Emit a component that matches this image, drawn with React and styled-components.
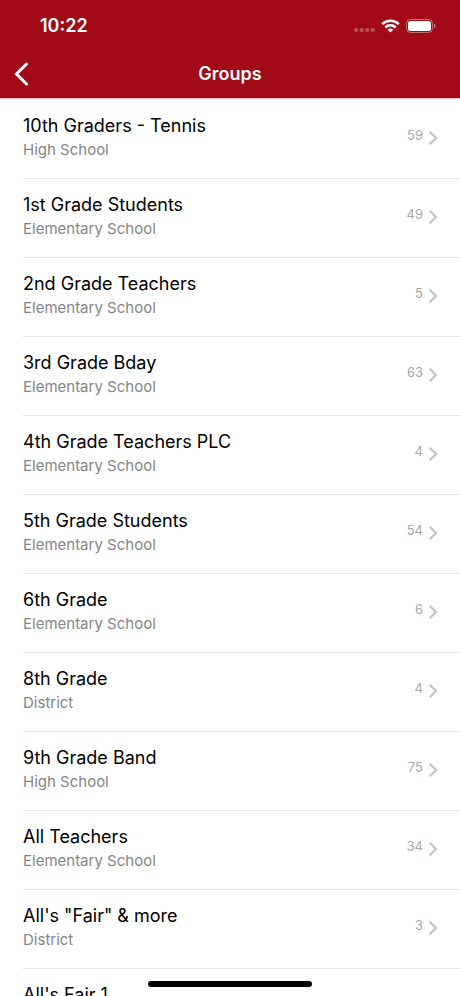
import React from 'react';
import styled, { createGlobalStyle } from 'styled-components';

const GlobalStyle = createGlobalStyle`
  *, *::before, *::after { box-sizing: border-box; }
  body {
    margin: 0;
    background: #fff;
    color: #000;
    font-family: Inter, "Liberation Sans", sans-serif;
  }
`;

const Screen = styled.div`
  display: flex;
  flex-direction: column;
  height: 100vh;
  overflow: hidden;
  background: #fff;
`;

const Header = styled.header`
  flex: none;
  border-bottom: 1px solid #f5b5bc;
  background: #a10a16;
  background-clip: padding-box;
  color: #fff;
`;

const StatusBar = styled.div`
  display: flex;
  align-items: center;
  justify-content: space-between;
  height: 50px;
  padding: 2px 24px 0 40px;
`;

const Clock = styled.time`
  font-size: 18px;
  line-height: 24px;
  font-weight: 600;
`;

const StatusIcons = styled.div`
  display: flex;
  align-items: flex-end;
  gap: 6px;
`;

const NavBar = styled.nav`
  display: grid;
  grid-template-columns: 48px 1fr 48px;
  align-items: center;
  height: 48px;
`;

const BackButton = styled.button`
  display: flex;
  align-items: center;
  height: 48px;
  padding: 0 0 0 13px;
  border: 0;
  background: none;
  color: inherit;
  cursor: pointer;
`;

const Title = styled.h1`
  margin: 0;
  font-size: 18px;
  line-height: 24px;
  font-weight: 600;
  text-align: center;
`;

const List = styled.ul`
  flex: 1;
  min-height: 0;
  margin: 0;
  padding: 1px 0 0 23px;
  list-style: none;
  overflow: hidden;
`;

const Item = styled.li`
  border-bottom: 1px solid #e5e5e6;
`;

const Row = styled.a`
  display: flex;
  align-items: center;
  gap: 5px;
  padding: 14px 22px 16px 0;
  color: inherit;
  text-decoration: none;
`;

const Info = styled.div`
  flex: 1;
  min-width: 0;
`;

const Name = styled.div`
  font-size: 18px;
  line-height: 24px;
`;

const School = styled.div`
  font-size: 15px;
  line-height: 24px;
  color: #868686;
`;

const Count = styled.span`
  padding-bottom: 6px;
  font-size: 13px;
  line-height: 20px;
  color: #a8a8a8;
`;

const HomeIndicator = styled.div`
  position: fixed;
  bottom: 9px;
  left: 50%;
  width: 164px;
  height: 6px;
  margin-left: -82px;
  border-radius: 3px;
  background: #000;
`;

const groups = [
  ['10th Graders - Tennis', 'High School', 59],
  ['1st Grade Students', 'Elementary School', 49],
  ['2nd Grade Teachers', 'Elementary School', 5],
  ['3rd Grade Bday', 'Elementary School', 63],
  ['4th Grade Teachers PLC', 'Elementary School', 4],
  ['5th Grade Students', 'Elementary School', 54],
  ['6th Grade', 'Elementary School', 6],
  ['8th Grade', 'District', 4],
  ['9th Grade Band', 'High School', 75],
  ['All Teachers', 'Elementary School', 34],
  ['All\'s "Fair" & more', 'District', 3],
  ["All's Fair 1", 'District', 3],
];

const Chevron = () => (
  <svg width="10" height="16" viewBox="0 0 10 16" fill="none" stroke="#c4c4c6" strokeWidth="2.2" aria-hidden="true">
    <path d="M1.7 1.7 8 8l-6.3 6.3" />
  </svg>
);

const Signal = () => (
  <svg width="21" height="6" viewBox="0 0 21 6" fill="#fff" fillOpacity=".28" aria-hidden="true">
    <rect x=".2" y="1" width="4" height="4" rx="1.4" />
    <rect x="5.7" y="1" width="4" height="4" rx="1.4" />
    <rect x="11.2" y="1" width="4" height="4" rx="1.4" />
    <rect x="16.7" y="1" width="4" height="4" rx="1.4" />
  </svg>
);

const Wifi = () => (
  <svg width="19" height="14" viewBox="0 0 19 14" fill="none" stroke="#fff" strokeWidth="2.5" aria-hidden="true">
    <path d="M1.2 5.2a11.8 11.8 0 0 1 16.6 0" />
    <path d="M4.3 8.5a7.4 7.4 0 0 1 10.4 0" />
    <path d="M9.5 13.6 6.7 10.8a4 4 0 0 1 5.6 0z" fill="#fff" stroke="none" />
  </svg>
);

const Battery = () => (
  <svg width="30" height="14" viewBox="0 0 30 14" aria-hidden="true">
    <rect x=".5" y=".5" width="26" height="13" rx="4" fill="none" stroke="#fff" strokeOpacity=".4" />
    <rect x="2" y="2" width="23" height="10" rx="2.5" fill="#fff" />
    <path d="M28 4.5c1.8.8 1.8 4.2 0 5z" fill="#fff" fillOpacity=".5" />
  </svg>
);

export default function App() {
  return (
    <Screen>
      <GlobalStyle />
      <Header>
        <StatusBar>
          <Clock>10:22</Clock>
          <StatusIcons>
            <Signal />
            <Wifi />
            <Battery />
          </StatusIcons>
        </StatusBar>
        <NavBar>
          <BackButton type="button" aria-label="Back">
            <svg width="16" height="24" viewBox="0 0 16 24" fill="none" stroke="currentColor" strokeWidth="3" strokeLinecap="round" aria-hidden="true">
              <path d="M13.5 2 3.5 12l10 10" />
            </svg>
          </BackButton>
          <Title>Groups</Title>
        </NavBar>
      </Header>
      <List>
        {groups.map(([name, school, count]) => (
          <Item key={name}>
            <Row href="#">
              <Info>
                <Name>{name}</Name>
                <School>{school}</School>
              </Info>
              <Count>{count}</Count>
              <Chevron />
            </Row>
          </Item>
        ))}
      </List>
      <HomeIndicator />
    </Screen>
  );
}
